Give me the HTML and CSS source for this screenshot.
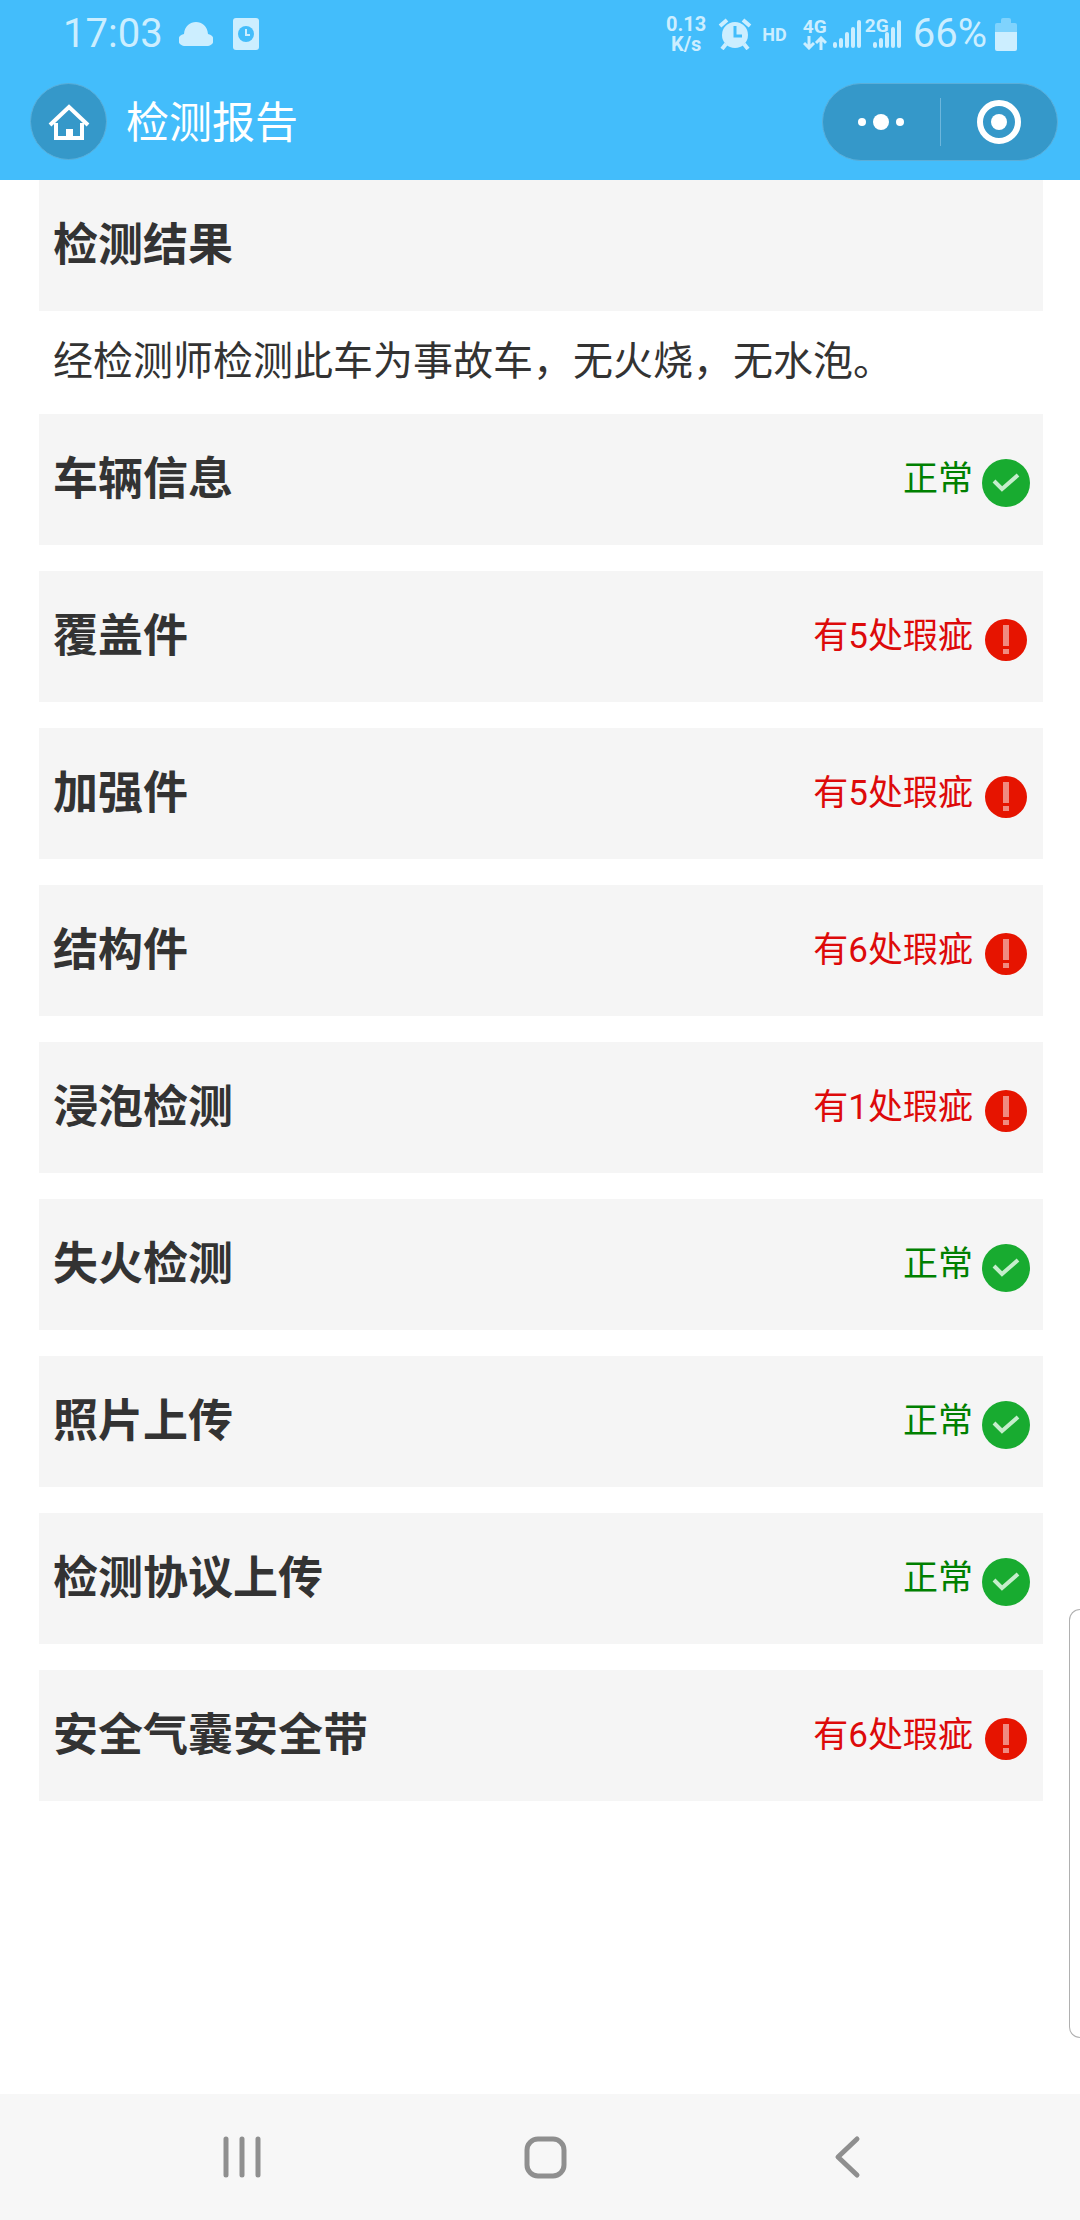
FILE: index.html
```
<!DOCTYPE html>
<html lang="zh-CN">
<head>
<meta charset="UTF-8">
<meta name="viewport" content="width=device-width, initial-scale=1">
<title>检测报告</title>

<link rel="stylesheet" href="styles.css">
</head>

<body>

<!-- shared icons -->
<svg class="sprite" aria-hidden="true">
<symbol id="ok" viewBox="0 0 48 48">
<circle cx="24" cy="24" r="24" fill="#18ab30"/>
<path d="M12 22L20 30L36 16" fill="none" stroke="#c5edcc" stroke-width="4"/>
</symbol>
<symbol id="warn" viewBox="0 0 48 48">
<circle cx="24" cy="24" r="21" fill="#e61400"/>
<path d="M21 9H27V30H21ZM21 33H27V38H21Z" fill="#f08a80"/>
</symbol>
<symbol id="bars" viewBox="0 0 28 28">
<path d="M2 24V26M8 20V26M14 14V26M20 9V26M26 2V26" stroke="currentColor" stroke-width="4" stroke-linecap="round"/>
</symbol>
</svg>

<header class="header">

<div class="status">
<span class="time">17:03</span>
<svg class="cloud" width="34" height="24" viewBox="0 0 34 24">
<path d="M6 24A6 6 0 0 1 5 12C6 -4 28 -4 29 12A6 6 0 0 1 28 24Z" fill="currentColor"/>
</svg>
<svg class="doc" width="26" height="32" viewBox="0 0 26 32">
<rect width="26" height="32" rx="3" fill="currentColor"/>
<circle cx="13" cy="16" r="8" fill="#43bdfb"/>
<path d="M13 11V17H17" fill="none" stroke="currentColor" stroke-width="2"/>
</svg>

<span class="speed">0.13<br>K/s</span>
<svg class="alarm" width="34" height="32" viewBox="0 0 34 32">
<circle cx="17" cy="17" r="13" fill="currentColor"/>
<path d="M2 8L9 2M32 8L25 2M8 26L4 31M26 26L30 31" stroke="currentColor" stroke-width="4"/>
<path d="M17 8V18H24" fill="none" stroke="#43bdfb" stroke-width="3"/>
</svg>
<span class="hd">HD</span>
<span class="net">
<span>4G</span>
<svg width="24" height="14" viewBox="0 0 24 14">
<path d="M6 0V12M1 7L6 12L11 7M18 14V2M13 7L18 2L23 7" fill="none" stroke="currentColor" stroke-width="3"/>
</svg>
</span>
<svg class="signal" width="28" height="28"><use href="#bars"/></svg>
<span class="sim">
<span class="simname">2G</span>
<svg width="28" height="28"><use href="#bars"/></svg>
</span>
<span class="percent">66%</span>
<svg class="battery" width="22" height="33" viewBox="0 0 22 33">
<path d="M6 5V2Q6 0 8 0H14Q16 0 16 2V5H20Q22 5 22 7V15H0V7Q0 5 2 5Z" fill="#7fd3fd"/>
<path d="M0 14H22V31Q22 33 20 33H2Q0 33 0 31Z" fill="currentColor"/>
</svg>
</div>

<div class="titlebar">
<button class="home" aria-label="首页">
<svg width="42" height="38" viewBox="0 0 42 38">
<path d="M2 22L21 4L40 22M8 20V35H34V20" fill="none" stroke="#fff" stroke-width="4"/>
<path d="M18 26H25V36H18Z" fill="#fff"/>
</svg>
</button>
<h1>检测报告</h1>
<div class="capsule">
<button class="more" aria-label="更多">
<svg width="48" height="16" viewBox="0 0 48 16">
<g fill="#fff"><circle cx="5" cy="8" r="4"/><circle cx="24" cy="8" r="8"/><circle cx="43" cy="8" r="4"/></g>
</svg>
</button>
<button class="close" aria-label="关闭">
<svg width="44" height="44" viewBox="0 0 44 44">
<circle cx="22" cy="22" r="19" fill="none" stroke="#fff" stroke-width="6"/>
<circle cx="22" cy="22" r="8" fill="#fff"/>
</svg>
</button>
</div>
</div>

</header>

<main class="report">

<div class="row">
<h2>检测结果</h2>
</div>
<p class="summary">经检测师检测此车为事故车，无火烧，无水泡。</p>

<ul class="list">
<li class="row">
<h2>车辆信息</h2>
<span class="good">正常</span>
<svg class="mark"><use href="#ok"/></svg>
</li>
<li class="row">
<h2>覆盖件</h2>
<span class="bad">有5处瑕疵</span>
<svg class="mark"><use href="#warn"/></svg>
</li>
<li class="row">
<h2>加强件</h2>
<span class="bad">有5处瑕疵</span>
<svg class="mark"><use href="#warn"/></svg>
</li>
<li class="row">
<h2>结构件</h2>
<span class="bad">有6处瑕疵</span>
<svg class="mark"><use href="#warn"/></svg>
</li>
<li class="row">
<h2>浸泡检测</h2>
<span class="bad">有1处瑕疵</span>
<svg class="mark"><use href="#warn"/></svg>
</li>
<li class="row">
<h2>失火检测</h2>
<span class="good">正常</span>
<svg class="mark"><use href="#ok"/></svg>
</li>
<li class="row">
<h2>照片上传</h2>
<span class="good">正常</span>
<svg class="mark"><use href="#ok"/></svg>
</li>
<li class="row">
<h2>检测协议上传</h2>
<span class="good">正常</span>
<svg class="mark"><use href="#ok"/></svg>
</li>
<li class="row">
<h2>安全气囊安全带</h2>
<span class="bad">有6处瑕疵</span>
<svg class="mark"><use href="#warn"/></svg>
</li>
</ul>

</main>

<div class="edge"></div>

<nav class="navbar">
<button aria-label="最近">
<svg width="44" height="44" viewBox="0 0 44 44">
<path d="M5 4V40M21 4V40M37 4V40" stroke="#8f8f8f" stroke-width="5" stroke-linecap="round"/>
</svg>
</button>
<button aria-label="主屏幕">
<svg width="44" height="44" viewBox="0 0 44 44">
<rect x="4" y="4" width="37" height="37" rx="11" fill="none" stroke="#8f8f8f" stroke-width="5"/>
</svg>
</button>
<button aria-label="返回">
<svg width="44" height="44" viewBox="0 0 44 44">
<path d="M32 4L13 22L32 40" fill="none" stroke="#8f8f8f" stroke-width="5" stroke-linecap="round" stroke-linejoin="round"/>
</svg>
</button>
</nav>

</body>
</html>
```
FILE: styles.css
```
*{
box-sizing:border-box;
}

body{
margin:0;
min-height:100vh;
display:flex;
flex-direction:column;
position:relative;
background:#fff;
color:#333;
font-family:Roboto,"Noto Sans CJK SC",sans-serif;
}

h1,h2,p,ul{
margin:0;
padding:0;
}

button{
padding:0;
border:none;
background:none;
display:flex;
align-items:center;
justify-content:center;
cursor:pointer;
}

svg{
display:block;
flex:none;
}

.sprite{
position:absolute;
width:0;
height:0;
}

/* top bar */
.header{
height:180px;
background:#43bdfb;
color:#fff;
}

.status{
height:66px;
display:flex;
align-items:center;
padding:2px 63px 0;
color:#cceeff;
font-weight:700;
}

.time,.percent{
font-size:40px;
line-height:40px;
font-weight:400;
}

.cloud{
margin-left:16px;
}

.doc{
margin-left:20px;
}

.speed{
margin-left:auto;
font-size:20px;
line-height:20px;
text-align:center;
}

.alarm{
margin-left:12px;
}

.hd{
margin:0 16px 0 10px;
font-size:18px;
}

.net{
display:flex;
flex-direction:column;
align-items:center;
font-size:19px;
line-height:18px;
}

.signal{
margin-left:6px;
}

.sim{
position:relative;
margin-left:12px;
}

.simname{
position:absolute;
left:-8px;
top:-4px;
font-size:19px;
line-height:20px;
}

.percent{
margin:0 8px 0 12px;
}

.titlebar{
display:flex;
align-items:center;
height:111px;
padding:0 22px 0 30px;
}

.home{
width:77px;
height:77px;
border:1px solid #5aaed9;
border-radius:50%;
background:#3598c9;
}

h1{
flex:1;
margin-left:19px;
padding-top:2px;
font-size:43px;
line-height:60px;
font-weight:400;
}

.capsule{
display:flex;
align-items:center;
width:236px;
height:78px;
border:1px solid #5aaed9;
border-radius:39px;
background:#3598c9;
}

.capsule button{
flex:1;
height:48px;
}

.capsule .close{
border-left:1px solid #6db6dc;
}

/* report */
.report{
flex:1;
padding:0 37px 0 39px;
}

.row{
display:flex;
align-items:center;
height:131px;
padding:0 13px 0 14px;
background:#f5f5f5;
}

h2{
flex:1;
font-size:45px;
line-height:60px;
font-weight:700;
}

.summary{
padding:21px 14px 22px;
font-size:40px;
line-height:60px;
}

.list{
display:grid;
gap:26px;
list-style:none;
}

.good,.bad{
font-size:35px;
line-height:48px;
}

.good{
color:#008000;
}

.bad{
color:#dd0a0a;
}

.mark{
width:48px;
height:48px;
margin:6px 0 0 9px;
}

/* side panel handle at the screen edge */
.edge{
position:absolute;
right:0;
bottom:182px;
width:11px;
height:429px;
border:1px solid #b0b0b0;
border-right:none;
border-radius:14px 0 0 14px;
background:#fff;
}

.navbar{
display:flex;
justify-content:space-between;
align-items:center;
height:126px;
padding:0 211px 0 221px;
background:#f7f7f7;
}
```
